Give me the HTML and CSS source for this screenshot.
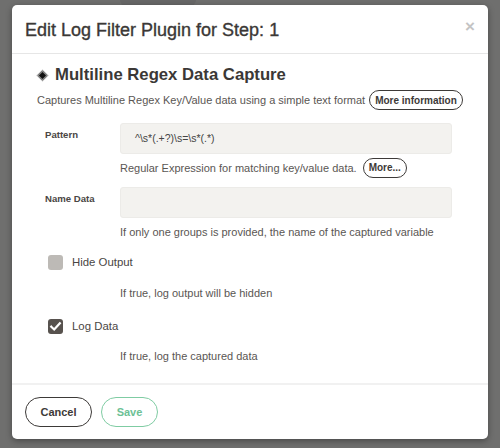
FILE: index.html
```html
<!DOCTYPE html>
<html>
<head>
<meta charset="utf-8">
<link rel="stylesheet" href="styles.css">
</head>
<body>
<div class="backdrop">
  <div class="bg-tab"></div>
  <div class="modal">
    <div class="modal-header">
      <h4 class="modal-title">Edit Log Filter Plugin for Step: 1</h4>
      <span class="close">×</span>
    </div>
    <div class="modal-body">
      <div class="plugin-title"><span class="diamond"></span>Multiline Regex Data Capture</div>
      <div class="plugin-desc">Captures Multiline Regex Key/Value data using a simple text format <span class="pill">More information</span></div>

      <div class="row row-pattern">
        <div class="label">Pattern</div>
        <div class="input">^\s*(.+?)\s=\s*(.*)</div>
      </div>
      <div class="help help-pill">Regular Expression for matching key/value data. <span class="pill">More...</span></div>

      <div class="row row-name">
        <div class="label">Name Data</div>
        <div class="input"></div>
      </div>
      <div class="help help-name">If only one groups is provided, the name of the captured variable</div>

      <div class="check-row check-hide">
        <span class="box"></span><span class="check-label">Hide Output</span>
      </div>
      <div class="help help-hide">If true, log output will be hidden</div>

      <div class="check-row check-log">
        <span class="box checked"><svg viewBox="0 0 16 16" width="16" height="16"><path d="M3.5 8.2 L6.6 11.2 L12.6 4.6" fill="none" stroke="#fff" stroke-width="2.4" stroke-linecap="square"/></svg></span><span class="check-label">Log Data</span>
      </div>
      <div class="help help-log">If true, log the captured data</div>
    </div>
    <div class="modal-footer">
      <span class="btn btn-cancel">Cancel</span>
      <span class="btn btn-save">Save</span>
    </div>
  </div>
</div>
</body>
</html>
```

FILE: styles.css
```css
* { box-sizing: border-box; }
html, body { margin: 0; padding: 0; }
body {
  width: 500px;
  height: 448px;
  overflow: hidden;
  background: #6f6f6e;
  font-family: "Liberation Sans", Arial, sans-serif;
}
.backdrop {
  position: relative;
  width: 500px;
  height: 448px;
  padding: 5px 12px 0 12px;
}
.bg-tab {
  position: absolute;
  left: 120px;
  top: 0;
  width: 76px;
  height: 6px;
  background: #676767;
  border-radius: 0 0 6px 6px;
}
.modal {
  position: relative;
  width: 476px;
  height: 434px;
  background: #fff;
  border-radius: 5px;
  box-shadow: 0 2px 6px rgba(0,0,0,0.35);
}
.modal-header {
  height: 49px;
  border-bottom: 1px solid #e6e6e6;
  padding: 0 13px;
  display: flex;
  align-items: center;
}
.modal-title {
  margin: 0;
  font-size: 18px;
  font-weight: normal;
  color: #3b3836;
  -webkit-text-stroke: 0.35px #3b3836;
  padding-top: 2px;
}
.close {
  position: absolute;
  right: 13px;
  top: 12px;
  font-size: 17px;
  font-weight: bold;
  color: #c4c4c4;
}
.modal-body {
  padding: 10px 25px 19px 25px;
  color: #555;
}
.plugin-title {
  display: flex;
  align-items: center;
  height: 22px;
  font-size: 16.7px;
  font-weight: bold;
  color: #3b3836;
}
.diamond {
  display: inline-block;
  width: 7px;
  height: 7px;
  background: #111;
  border: 1px solid #888;
  box-shadow: 0 0 0 1px #ccc;
  transform: rotate(45deg);
  margin: 0 9px 0 2px;
}
.plugin-desc {
  margin-top: 4px;
  height: 20px;
  display: flex;
  align-items: center;
  font-size: 11px;
  color: #5a5653;
  white-space: nowrap;
}
.pill {
  display: inline-flex;
  align-items: center;
  height: 20px;
  padding: 0 5px;
  margin-left: 4px;
  border: 1.3px solid #3d3a38;
  border-radius: 10px;
  font-size: 10px;
  font-weight: bold;
  color: #3d3a38;
}
.row {
  display: flex;
  padding-left: 8px;
}
.row-pattern { margin-top: 13px; }
.row-name { margin-top: 9px; }
.label {
  width: 75px;
  flex: none;
  font-size: 9.6px;
  font-weight: bold;
  color: #4a4644;
  padding-top: 6px;
}
.input {
  width: 332px;
  height: 31px;
  background: #f3f2ef;
  border: 1px solid #ecebe8;
  border-radius: 3px;
  padding-left: 14px;
  font-size: 10.5px;
  line-height: 29px;
  color: #444;
}
.help {
  margin-left: 83px;
  font-size: 11px;
  color: #5a5653;
  height: 16px;
  line-height: 16px;
  white-space: nowrap;
}
.help-pill {
  margin-top: 4px;
  height: 20px;
  display: flex;
  align-items: center;
}
.help-pill .pill { margin-left: 6px; }
.help-name { margin-top: 6px; }
.check-row {
  display: flex;
  align-items: center;
  height: 16px;
  padding-left: 11px;
}
.check-hide { margin-top: 14px; }
.check-log { margin-top: 17px; }
.help-hide { margin-top: 15px; }
.help-log { margin-top: 14px; }
.box {
  width: 15px;
  height: 15px;
  border-radius: 3px;
  background: #bdbab6;
  display: inline-flex;
  align-items: center;
  justify-content: center;
}
.box.checked { background: #57524e; }
.box svg { width: 15px; height: 15px; }
.check-label {
  margin-left: 9px;
  font-size: 11.4px;
  color: #4a4644;
}
.modal-footer {
  border-top: 2px solid #f1f1f1;
  padding: 12px 13px;
  display: flex;
  gap: 9px;
}
.btn {
  height: 30px;
  border-radius: 15px;
  display: inline-flex;
  align-items: center;
  justify-content: center;
  font-size: 11px;
  font-weight: bold;
}
.btn-cancel {
  width: 67px;
  border: 1.5px solid #3d3a38;
  color: #3d3a38;
}
.btn-save {
  width: 57px;
  border: 1.5px solid #7fcca3;
  color: #6cc195;
}
```
